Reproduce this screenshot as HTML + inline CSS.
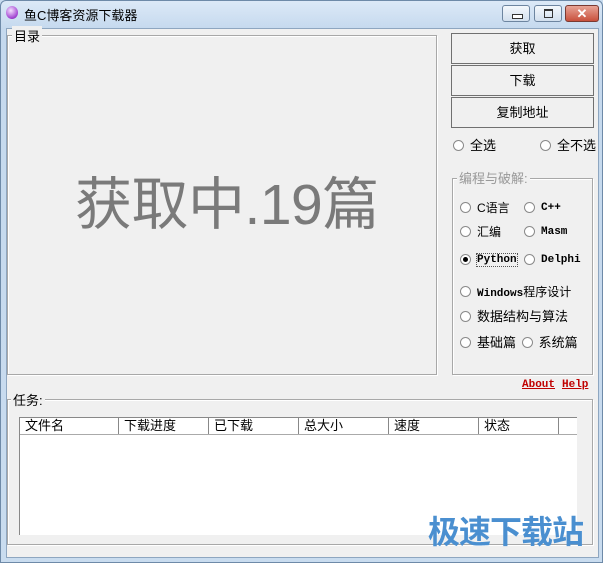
<html><head><style>
body{margin:0;width:603px;height:563px;overflow:hidden;background:#c9dcef;font-family:"Liberation Sans","Noto Sans CJK SC",sans-serif;font-size:12px;color:#000}
.a{position:absolute}
.win{left:0;top:0;width:601px;height:561px;border:1px solid #6e8aa8;border-radius:6px 6px 0 0;background:linear-gradient(#dce9f7,#c5d9ee 28px,#c9dcef)}
.client{left:6px;top:28px;width:591px;height:528px;background:#f0f0f0;border:1px solid #8ea6c0}
.grp{border:1px solid #a8a8a8;box-shadow:1px 1px 0 #fff,inset 1px 1px 0 #fff}
.lbl{background:#f0f0f0;padding:0 2px}
.btn{left:451px;width:141px;height:29px;border:1px solid #707070;background:#f0f0f0;text-align:center;line-height:29px;font-size:13px}
.rw{position:absolute;height:14px;line-height:14px;white-space:nowrap}
.r{display:inline-block;width:9px;height:9px;border:1px solid #8a8a8a;border-radius:50%;background:#fff;vertical-align:top;margin-top:1px;margin-right:6px;position:relative}
.mono{font-family:"Liberation Mono","Noto Sans CJK SC",monospace;font-size:11px;font-weight:bold}
.hd{top:418px;height:16px;border-right:1px solid #888;font-size:13px;line-height:16px;padding-left:5px;box-sizing:border-box}
.tb{top:5px;height:15px;border:1px solid #6d85a0;border-radius:3px;background:linear-gradient(#f4f8fc,#d2dfee)}
</style></head><body>
<div class="a win"></div>
<div class="a" style="left:6px;top:6px;width:12px;height:13px;border-radius:50%;background:radial-gradient(circle at 40% 35%,#f5e0ff,#a040d0 70%,#5a1a80)"></div>
<div class="a" style="left:24px;top:5px;font-size:13px">鱼C博客资源下载器</div>
<div class="a tb" style="left:502px;width:26px"><div class="a" style="left:9px;top:8px;width:9px;height:3px;border:1px solid #333;background:#fff"></div></div>
<div class="a tb" style="left:534px;width:26px"><div class="a" style="left:9px;top:3px;width:7px;height:6px;border:1px solid #333;border-top-width:2px"></div></div>
<div class="a" style="left:565px;top:5px;width:32px;height:15px;border:1px solid #7a3a32;border-radius:3px;background:linear-gradient(#e8a496,#c8503c);color:#fff;font-weight:bold;text-align:center;line-height:15px;font-size:13px">✕</div>
<div class="a client"></div>
<div class="a grp" style="left:7px;top:35px;width:428px;height:338px"></div>
<div class="a lbl" style="left:12px;top:26px;font-size:13px">目录</div>
<div class="a" style="left:75px;top:159px;font-size:57px;color:#7a7a7a;letter-spacing:-0.5px">获取中.19篇</div>
<div class="a btn" style="top:33px">获取</div>
<div class="a btn" style="top:65px">下载</div>
<div class="a btn" style="top:97px">复制地址</div>
<div class="rw" style="left:453px;top:139px;font-size:13px"><span class="r"></span>全选</div>
<div class="rw" style="left:540px;top:139px;font-size:13px"><span class="r"></span>全不选</div>
<div class="a grp" style="left:452px;top:178px;width:139px;height:195px"></div>
<div class="a lbl" style="left:457px;top:168px;color:#999;font-size:13px">编程与破解:</div>
<div class="rw" style="left:460px;top:201px"><span class="r"></span>C语言</div>
<div class="rw" style="left:524px;top:201px"><span class="r"></span><span class="mono">C++</span></div>
<div class="rw" style="left:460px;top:225px"><span class="r"></span>汇编</div>
<div class="rw" style="left:524px;top:225px"><span class="r"></span><span class="mono">Masm</span></div>
<div class="rw" style="left:460px;top:253px"><span class="r"><span class="a" style="left:2px;top:2px;width:5px;height:5px;border-radius:50%;background:#000"></span></span><span class="mono" style="outline:1px dotted #555">Python</span></div>
<div class="rw" style="left:524px;top:253px"><span class="r"></span><span class="mono">Delphi</span></div>
<div class="rw" style="left:460px;top:285px"><span class="r"></span><span class="mono">Windows</span>程序设计</div>
<div class="rw" style="left:460px;top:310px;font-size:13px"><span class="r"></span>数据结构与算法</div>
<div class="rw" style="left:460px;top:336px;font-size:13px"><span class="r"></span>基础篇 <span class="r" style="margin-left:2px"></span>系统篇</div>
<div class="a mono" style="left:522px;top:379px;color:#c00000;text-decoration:underline">About</div>
<div class="a mono" style="left:562px;top:379px;color:#c00000;text-decoration:underline">Help</div>
<div class="a grp" style="left:7px;top:399px;width:584px;height:144px"></div>
<div class="a lbl" style="left:11px;top:390px;font-size:13px">任务:</div>
<div class="a" style="left:19px;top:417px;width:557px;height:117px;background:#fff;border-left:1px solid #888;border-top:1px solid #888"></div>
<div class="a" style="left:20px;top:418px;width:557px;height:16px;border-bottom:1px solid #aaa;background:#fff"></div>
<div class="a hd" style="left:20px;width:99px">文件名</div>
<div class="a hd" style="left:119px;width:90px">下载进度</div>
<div class="a hd" style="left:209px;width:90px">已下载</div>
<div class="a hd" style="left:299px;width:90px">总大小</div>
<div class="a hd" style="left:389px;width:90px">速度</div>
<div class="a hd" style="left:479px;width:80px">状态</div>
<div class="a" style="left:428px;top:512px;font-size:32px;font-weight:bold;color:#4a8fd0;letter-spacing:-1px;line-height:40px">极速下载站</div>
</body></html>
